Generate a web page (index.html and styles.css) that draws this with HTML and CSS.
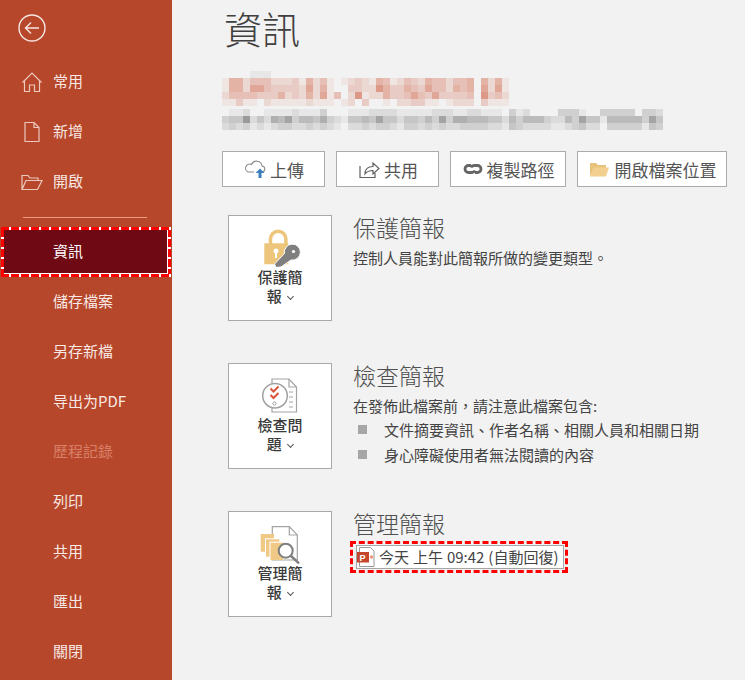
FILE: index.html
```html
<!DOCTYPE html>
<html lang="zh-Hant">
<head>
<meta charset="utf-8">
<title>資訊</title>
<link rel="stylesheet" href="styles.css">
</head>
<body>
<div class="app">
  <nav class="side">
    <div class="back">
      <svg width="30" height="30" viewBox="0 0 30 30" fill="none" stroke="#f6e6e1" stroke-width="1.4"><circle cx="15" cy="15" r="13"/><path d="M22 15H8.5M14 9.5 8.5 15l5.5 5.5"/></svg>
    </div>
    <a class="item">
      <svg class="ico" width="22" height="22" viewBox="0 0 22 22" fill="none" stroke="#ecc9bf" stroke-width="1.2"><path d="M1.5 11.5 11 2l9.5 9.5M3.5 10v10.5h5V14h5v6.5h5V10"/></svg>
      <span>常用</span>
    </a>
    <a class="item">
      <svg class="ico" width="22" height="22" viewBox="0 0 22 22" fill="none" stroke="#ecc9bf" stroke-width="1.2"><path d="M4 1.500h9l5 5v14H4zM13 1.500v5h5"/></svg>
      <span>新增</span>
    </a>
    <a class="item">
      <svg class="ico" width="22" height="22" viewBox="0 0 22 22" fill="none" stroke="#ecc9bf" stroke-width="1.2"><path d="M1 18.500V4.500h6l2 2.500h8v2.500M1 18.500h15.500L21 9.500H5z"/></svg>
      <span>開啟</span>
    </a>
    <div class="rule"><hr></div>
    <a class="item current"><span>資訊</span></a>
    <a class="item"><span>儲存檔案</span></a>
    <a class="item"><span>另存新檔</span></a>
    <a class="item"><span>导出为PDF</span></a>
    <a class="item off"><span>歷程記錄</span></a>
    <a class="item"><span>列印</span></a>
    <a class="item"><span>共用</span></a>
    <a class="item"><span>匯出</span></a>
    <a class="item"><span>關閉</span></a>
  </nav>
  <main class="main">
    <h1 class="title">資訊</h1>
    <svg id="mosaic" class="mosaic" width="450" height="60" viewBox="0 0 450 60" aria-hidden="true"></svg>
    <div class="actions">
      <button class="act w103">
        <svg width="24" height="20" viewBox="0 0 24 20" fill="none"><path d="M17 13h1.500a3 3 0 0 0 .5-6 5.500 5.500 0 0 0-10.500-1.500A4 4 0 0 0 5 13h6" stroke="#8a8a8a" stroke-width="1.100"/><path d="M17 9.500 12.500 14h3v5h3v-5h3z" fill="#3f7fbd"/></svg>
        <span>上傳</span>
      </button>
      <button class="act w103">
        <svg width="24" height="20" viewBox="0 0 24 20" fill="none" stroke="#5f5f5f" stroke-width="1.200"><path d="M3 7v11.500h15V14"/><path d="M8 15c0-5 3-7.500 8-7.500V4l6 5.500-6 5.500v-3.500c-3 0-6 1-8 3.500z"/></svg>
        <span>共用</span>
      </button>
      <button class="act w116">
        <svg width="22" height="20" viewBox="0 0 22 20" fill="none" stroke="#666" stroke-width="2.800"><path d="M9 6.500H6.500a3.500 3.500 0 0 0 0 7H10a3.500 3.500 0 0 0 3-2"/><path d="M13 13.500h2.500a3.500 3.500 0 0 0 0-7H12a3.500 3.500 0 0 0-3 2"/></svg>
        <span>複製路徑</span>
      </button>
      <button class="act w150">
        <svg width="22" height="20" viewBox="0 0 22 20"><path d="M2 17V4h6l2 2h8v3H6z" fill="#e8c27a"/><path d="M2 17.500 5.500 8.500H21l-3 9z" fill="#f2cf8e"/></svg>
        <span>開啟檔案位置</span>
      </button>
    </div>

    <section class="sec">
      <button class="card">
        <svg class="cico" width="48" height="43" viewBox="0 0 48 43">
          <path d="M14.500 18v-5a7.700 7.700 0 0 1 15.400 0v5" fill="none" stroke="#edc67c" stroke-width="3.500"/>
          <path d="M8.300 17.300h24v21h-24z" fill="#edc67c"/>
          <circle cx="20" cy="25" r="2.500" fill="#fff"/><path d="M19 25h2v7h-2z" fill="#fff"/>
          <path d="M20 41.500 18.500 38l10-10.500a8 8 0 1 1 6.500 6.500L25 41z" fill="#7f7f7f" stroke="#fff" stroke-width="1"/>
          <circle cx="37.500" cy="25.500" r="1.600" fill="#fff"/>
        </svg>
        <span class="clabel">保護簡<br>報 <i class="chev"></i></span>
      </button>
      <div class="body">
        <h2>保護簡報</h2>
        <p class="first">控制人員能對此簡報所做的變更類型。</p>
      </div>
    </section>

    <section class="sec">
      <button class="card">
        <svg class="cico" width="48" height="43" viewBox="0 0 48 43">
          <path d="M16 5h17l7.500 8v25H16z" fill="#fff" stroke="#a3a3a3" stroke-width="1.200"/>
          <path d="M33 5v8h7.500" fill="none" stroke="#a3a3a3" stroke-width="1.200"/>
          <path d="M33 18h4M33 23h4M33 28h4M33 33h4" stroke="#a3a3a3"/>
          <circle cx="19" cy="21.700" r="12.300" fill="#fff" stroke="#a0a0a0" stroke-width="1.500"/>
          <path d="M14.500 14.500l3 3 5-5M14.500 21l3 3 5-5" fill="none" stroke="#d9563b" stroke-width="2"/>
          <circle cx="18.500" cy="29.500" r="1.600" fill="none" stroke="#a0a0a0"/>
        </svg>
        <span class="clabel">檢查問<br>題 <i class="chev"></i></span>
      </button>
      <div class="body">
        <h2>檢查簡報</h2>
        <p class="first">在發佈此檔案前，請注意此檔案包含:</p>
        <ul class="list">
          <li>文件摘要資訊、作者名稱、相關人員和相關日期</li>
          <li>身心障礙使用者無法閱讀的內容</li>
        </ul>
      </div>
    </section>

    <section class="sec">
      <button class="card">
        <svg class="cico" width="48" height="43" viewBox="0 0 48 43">
          <path d="M16.300 4.700h17l8 8.300v25h-25z" fill="#fff" stroke="#a3a3a3" stroke-width="1.200"/>
          <path d="M33.300 4.700V13h8" fill="none" stroke="#a3a3a3" stroke-width="1.200"/>
          <path d="M4.700 12h13.300v17.700H4.700z" fill="#f0c987"/>
          <path d="M9 16.300h14.300v18.400H9z" fill="#fff"/><path d="M10 17.300h13.300v17.400H10z" fill="#f0c987"/>
          <path d="M13.500 19.700h14v18.300h-14z" fill="#fff"/><path d="M14.500 20.700h12.800v17.300H14.500z" fill="#f0c987"/>
          <circle cx="29.700" cy="28.700" r="7" fill="#fff" stroke="#7f7f7f" stroke-width="2"/>
          <path d="M34.500 33.500 43 41.300" stroke="#7f7f7f" stroke-width="2.500"/>
        </svg>
        <span class="clabel">管理簡<br>報 <i class="chev"></i></span>
      </button>
      <div class="body">
        <h2>管理簡報</h2>
        <div class="mark">
          <div class="file">
            <svg width="22" height="22" viewBox="0 0 22 22">
              <path d="M2.500 1.500h11l3.500 3.500v15.500H2.500z" fill="#fff" stroke="#9a9a9a"/>
              <path d="M0 6h12v10.500H0z" fill="#c4472b"/>
              <text class="ptext" x="2.500" y="14.800">P</text>
              <circle cx="14.500" cy="11" r="1.800" fill="#ee9a80"/>
            </svg>
            <span class="ftext">今天 上午 09:42 (自動回復)</span>
          </div>
        </div>
      </div>
    </section>
  </main>
</div>
<script src="mosaic.js"></script>
</body>
</html>
```
FILE: styles.css
```css
* { box-sizing: border-box; }
html, body { margin: 0; height: 680px; overflow: hidden; }
body {
  background: #f2f2f2;
  color: #444;
  font-family: "Noto Sans CJK TC", "Noto Sans", sans-serif;
}
.app { display: flex; height: 680px; }

.side {
  width: 172px;
  flex: none;
  background: #b7472a;
  display: flex;
  flex-direction: column;
}
.back { height: 57px; padding: 13px 0 0 17px; }
.back svg { display: block; }
.item {
  height: 50px;
  flex: none;
  display: flex;
  align-items: center;
  padding: 0 0 2px 53px;
  position: relative;
  color: #f7e9e5;
  font-size: 15px;
  line-height: 20px;
}
.ico { position: absolute; left: 21px; top: 14px; }
.rule { height: 20px; padding: 10px 25px 0 23px; }
.rule hr { margin: 0; border: 0; height: 1px; background: #ec9a85; }
.item.current {
  margin: 0 1px;
  padding-left: 49px;
  color: #fff;
  border: 3px solid transparent;
  box-shadow: inset -1px -1px 0 #fff;
  background:
    linear-gradient(#6f0913, #6f0913) padding-box,
    repeating-linear-gradient(90deg, #f00 0 8px, #fff 8px 10px) top / 100% 3px no-repeat border-box,
    repeating-linear-gradient(90deg, #f00 0 8px, #fff 8px 10px) bottom / 100% 3px no-repeat border-box,
    repeating-linear-gradient(0deg, #f00 0 8px, #fff 8px 10px) left / 3px 100% no-repeat border-box,
    repeating-linear-gradient(0deg, #f00 0 8px, #fff 8px 10px) right / 3px 100% no-repeat border-box;
}
.item.off { color: #d97f68; }

.main { flex: 1; padding: 0 0 0 50px; min-width: 0; }
.title {
  margin: 0;
  height: 57px;
  padding: 0 0 0 2px;
  font-size: 38px;
  line-height: 55px;
  font-weight: 300;
  color: #404040;
}
.mosaic { display: block; margin: 14px 0 0 0; }
.actions { display: flex; gap: 11px; margin-top: 20px; }
.act {
  height: 36px;
  padding: 0;
  background: #fff;
  border: 1.500px solid #ababab;
  display: flex;
  align-items: center;
  justify-content: center;
  gap: 3px;
  font: inherit;
  font-size: 17px;
  color: #555;
}
.w103 { width: 103px; }
.w116 { width: 116px; }
.w150 { width: 150px; gap: 5px; }

.sec { display: flex; height: 148px; padding-left: 6px; gap: 21px; }
.sec:first-of-type { margin-top: 28px; }
.card {
  width: 104px;
  height: 106px;
  flex: none;
  padding: 10px 0 0;
  background: #fff;
  border: 1.500px solid #a8a8a8;
  display: flex;
  flex-direction: column;
  align-items: center;
  font: inherit;
  color: #404040;
}
.cico { display: block; flex: none; margin-bottom: -2px; }
.clabel { font-size: 15px; line-height: 19px; font-weight: 500; text-align: center; color: #3a3a3a; }
.chev {
  display: inline-block;
  width: 5px;
  height: 5px;
  margin: 0 0 3px 3px;
  border-right: 1px solid #555;
  border-bottom: 1px solid #555;
  transform: rotate(45deg);
}
.body { min-width: 0; margin-top: -3px; }
.body h2 {
  margin: 0;
  font-size: 23px;
  line-height: 30px;
  font-weight: 300;
  color: #505050;
}
.first { margin: 0; padding-top: 5px; font-size: 15px; line-height: 22px; color: #444; }
.list { margin: 0; padding: 0; list-style: none; }
.list li {
  position: relative;
  padding-left: 31px;
  font-size: 15px;
  line-height: 25px;
  color: #444;
}
.list li::before {
  content: "";
  position: absolute;
  left: 5px;
  top: 8px;
  width: 9px;
  height: 9px;
  background: #a6a6a6;
}
.mark {
  margin: 3px 0 0 -3px;
  width: 218px;
  height: 32px;
  border: 3px dashed #f00;
  padding: 1px 3px;
}
.file {
  height: 24px;
  width: 208px;
  background: #fff;
  border: 1px solid #a6a6a6;
  display: flex;
  align-items: center;
  font-size: 15px;
  color: #444;
  white-space: nowrap;
}
.file svg { flex: none; }
.ftext { padding-bottom: 2px; word-spacing: 0.6px; }
.ptext { font: 700 9px "Liberation Sans", sans-serif; fill: #fff; }
```
FILE: mosaic.js
```js
var rows = [
  { y: 0, color: "#777777", cells: "000011100000" },
  { y: 7, color: "#d0654a", cells: "155244422231524101232154124325442445052510" },
  { y: 14, color: "#d0654a", cells: "155266433332625100332275335436442545062610" },
  { y: 21, color: "#d0654a", cells: "244443335232526140271225334643633334073420" },
  { y: 28, color: "#d0654a", cells: "113110211111211101203001022331101222031110" },
  { y: 38, color: "#777777", cells: "011200111121113000111222211111222112211103120000333100333330332" },
  { y: 45, color: "#777777", cells: "344824265735546321445474424435373665554425355532253744155555374" },
  { y: 52, color: "#777777", cells: "232312123322323210223233213323232233332214322221123422033333143" }
];
var svg = document.getElementById("mosaic");
rows.forEach(function (row) {
  row.cells.split("").forEach(function (level, i) {
    if (level === "0") return;
    var r = document.createElementNS("http://www.w3.org/2000/svg", "rect");
    r.setAttribute("x", i * 7);
    r.setAttribute("y", row.y);
    r.setAttribute("width", 7);
    r.setAttribute("height", 7);
    r.setAttribute("fill", row.color);
    r.setAttribute("fill-opacity", level * 0.09);
    svg.appendChild(r);
  });
});
```
